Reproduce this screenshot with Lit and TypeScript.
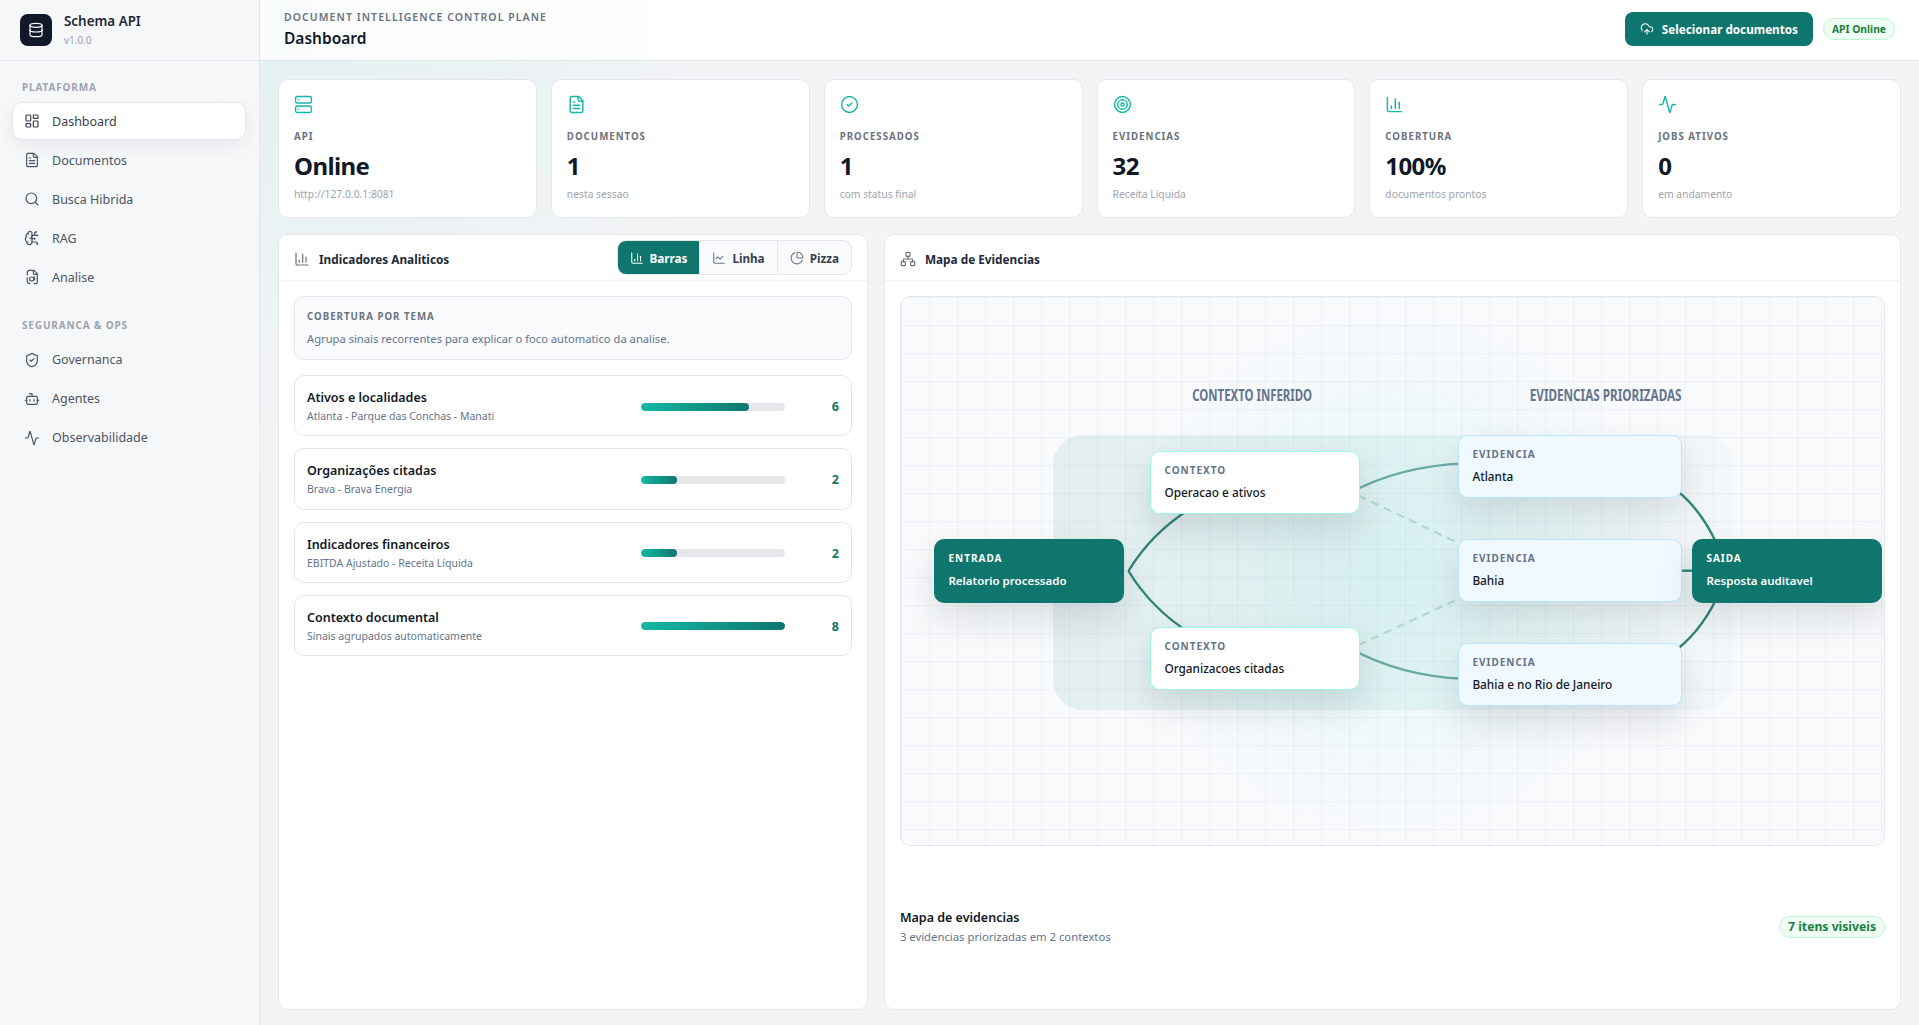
import { css, html, LitElement, svg } from "lit";
import { customElement } from "lit/decorators.js";

const ICONS = {
  dashboard: svg`<rect x="3" y="3" width="7" height="9" rx="1"/><rect x="14" y="3" width="7" height="5" rx="1"/><rect x="14" y="12" width="7" height="9" rx="1"/><rect x="3" y="16" width="7" height="5" rx="1"/>`,
  file: svg`<path d="M15 2H6a2 2 0 0 0-2 2v16a2 2 0 0 0 2 2h12a2 2 0 0 0 2-2V7Z"/><path d="M14 2v4a2 2 0 0 0 2 2h4"/><path d="M10 9H8"/><path d="M16 13H8"/><path d="M16 17H8"/>`,
  search: svg`<circle cx="11" cy="11" r="8"/><path d="m21 21-4.3-4.3"/>`,
  brain: svg`<path d="M12 5a3 3 0 1 0-5.997.125 4 4 0 0 0-2.526 5.77 4 4 0 0 0 .556 6.588A4 4 0 1 0 12 18Z"/><path d="M9 13a4.5 4.5 0 0 0 3-4"/><path d="M6.003 5.125A3 3 0 0 0 6.401 6.5"/><path d="M3.477 10.896a4 4 0 0 1 .585-.396"/><path d="M6 18a4 4 0 0 1-1.967-.516"/><path d="M12 13h4"/><path d="M12 18h6a2 2 0 0 1 2 2v1"/><path d="M12 8h8"/><path d="M16 8V5a2 2 0 0 1 2-2"/><circle cx="16" cy="13" r=".5"/><circle cx="18" cy="3" r=".5"/><circle cx="20" cy="21" r=".5"/><circle cx="20" cy="8" r=".5"/>`,
  scan: svg`<path d="M14 2v4a2 2 0 0 0 2 2h4"/><path d="M8 2h7l5 5v13a2 2 0 0 1-2 2h-3"/><path d="M8 2a3 3 0 0 0-3 3v4"/><path d="M5 13a8 8 0 0 0 0 5a4 4 0 0 0 4 4"/><circle cx="11.5" cy="15" r="3"/><path d="M15 11.5a5 5 0 0 1 1 5"/>`,
  shield: svg`<path d="M20 13c0 5-3.5 7.5-7.66 8.95a1 1 0 0 1-.67-.01C7.5 20.5 4 18 4 13V6a1 1 0 0 1 1-1c2 0 4.5-1.2 6.24-2.72a1.17 1.17 0 0 1 1.52 0C14.51 3.81 17 5 19 5a1 1 0 0 1 1 1z"/><path d="m9 12 2 2 4-4"/>`,
  bot: svg`<path d="M12 8V4H8"/><rect x="4" y="8" width="16" height="12" rx="2"/><path d="M2 14h2"/><path d="M20 14h2"/><path d="M15 13v2"/><path d="M9 13v2"/>`,
  activity: svg`<path d="M22 12h-2.48a2 2 0 0 0-1.93 1.46l-2.35 8.36a.25.25 0 0 1-.48 0L9.24 2.18a.25.25 0 0 0-.48 0l-2.35 8.36A2 2 0 0 1 4.49 12H2"/>`,
  database: svg`<ellipse cx="12" cy="5" rx="9" ry="3"/><path d="M3 5V19A9 3 0 0 0 21 19V5"/><path d="M3 12A9 3 0 0 0 21 12"/>`,
  server: svg`<rect x="2" y="2" width="20" height="8" rx="2"/><rect x="2" y="14" width="20" height="8" rx="2"/><path d="M6 6h.01"/><path d="M6 18h.01"/>`,
  check: svg`<circle cx="12" cy="12" r="10"/><path d="m9 12 2 2 4-4"/>`,
  target: svg`<circle cx="12" cy="12" r="10"/><circle cx="12" cy="12" r="6"/><circle cx="12" cy="12" r="2"/>`,
  column: svg`<path d="M3 3v16a2 2 0 0 0 2 2h16"/><path d="M18 17V9"/><path d="M13 17V5"/><path d="M8 17v-3"/>`,
  line: svg`<path d="M3 3v16a2 2 0 0 0 2 2h16"/><path d="m19 9-5 5-4-4-3 3"/>`,
  pie: svg`<path d="M21 12c.552 0 1.005-.449.95-.998a10 10 0 0 0-8.953-8.951c-.55-.055-.998.398-.998.95v8a1 1 0 0 0 1 1z"/><path d="M21.21 15.89A10 10 0 1 1 8 2.83"/>`,
  upload: svg`<path d="M12 13v8"/><path d="M4 14.899A7 7 0 1 1 15.71 8h1.79a4.5 4.5 0 0 1 2.5 8.242"/><path d="m8 17 4-4 4 4"/>`,
  network: svg`<rect x="16" y="16" width="6" height="6" rx="1"/><rect x="2" y="16" width="6" height="6" rx="1"/><rect x="9" y="2" width="6" height="6" rx="1"/><path d="M5 16v-3a1 1 0 0 1 1-1h12a1 1 0 0 1 1 1v3"/><path d="M12 12V8"/>`,
};

type IconName = keyof typeof ICONS;

const icon = (name: IconName, size = 16) => html`<svg
  class="icon"
  width=${size}
  height=${size}
  viewBox="0 0 24 24"
  fill="none"
  stroke="currentColor"
  stroke-width="1.8"
  stroke-linecap="round"
  stroke-linejoin="round"
>${ICONS[name]}</svg>`;

const NAV_GROUPS: { title: string; items: { label: string; icon: IconName; active?: boolean }[] }[] = [
  {
    title: "PLATAFORMA",
    items: [
      { label: "Dashboard", icon: "dashboard", active: true },
      { label: "Documentos", icon: "file" },
      { label: "Busca Hibrida", icon: "search" },
      { label: "RAG", icon: "brain" },
      { label: "Analise", icon: "scan" },
    ],
  },
  {
    title: "SEGURANCA & OPS",
    items: [
      { label: "Governanca", icon: "shield" },
      { label: "Agentes", icon: "bot" },
      { label: "Observabilidade", icon: "activity" },
    ],
  },
];

const STATS: { label: string; value: string; sub: string; icon: IconName }[] = [
  { label: "API", value: "Online", sub: "http://127.0.0.1:8081", icon: "server" },
  { label: "DOCUMENTOS", value: "1", sub: "nesta sessao", icon: "file" },
  { label: "PROCESSADOS", value: "1", sub: "com status final", icon: "check" },
  { label: "EVIDENCIAS", value: "32", sub: "Receita Líquida", icon: "target" },
  { label: "COBERTURA", value: "100%", sub: "documentos prontos", icon: "column" },
  { label: "JOBS ATIVOS", value: "0", sub: "em andamento", icon: "activity" },
];

const THEMES = [
  { name: "Ativos e localidades", sub: "Atlanta - Parque das Conchas - Manati", pct: 75, count: 6 },
  { name: "Organizações citadas", sub: "Brava - Brava Energia", pct: 25, count: 2 },
  { name: "Indicadores financeiros", sub: "EBITDA Ajustado - Receita Líquida", pct: 25, count: 2 },
  { name: "Contexto documental", sub: "Sinais agrupados automaticamente", pct: 100, count: 8 },
];

// canvas coordinates, origin at the inner corner of the map
const MAP_NODES = [
  { kind: "io", label: "ENTRADA", text: "Relatorio processado", x: 33, y: 242 },
  { kind: "ctx", label: "CONTEXTO", text: "Operacao e ativos", x: 249.5, y: 154 },
  { kind: "ctx", label: "CONTEXTO", text: "Organizacoes citadas", x: 249.5, y: 330 },
  { kind: "ev", label: "EVIDENCIA", text: "Atlanta", x: 557.5, y: 138 },
  { kind: "ev", label: "EVIDENCIA", text: "Bahia", x: 557.5, y: 242 },
  { kind: "ev", label: "EVIDENCIA", text: "Bahia e no Rio de Janeiro", x: 557.5, y: 346 },
  { kind: "io", label: "SAIDA", text: "Resposta auditavel", x: 791, y: 242 },
];

@customElement("app-root")
export class AppRoot extends LitElement {
  render() {
    return html`
      <aside class="sidebar">
        <div class="brand">
          <div class="logo">${icon("database", 16)}</div>
          <div>
            <div class="brand-name">Schema API</div>
            <div class="brand-version">v1.0.0</div>
          </div>
        </div>
        <nav class="nav">
          ${NAV_GROUPS.map(
            (group) => html`
              <div class="nav-group">
                <div class="nav-title">${group.title}</div>
                ${group.items.map(
                  (item) => html`
                    <a class="nav-item ${item.active ? "active" : ""}">
                      ${icon(item.icon, 16)}<span>${item.label}</span>
                    </a>
                  `
                )}
              </div>
            `
          )}
        </nav>
      </aside>

      <main class="main">
        <header class="topbar">
          <div>
            <div class="eyebrow">DOCUMENT INTELLIGENCE CONTROL PLANE</div>
            <h1>Dashboard</h1>
          </div>
          <div class="top-actions">
            <button class="primary">${icon("upload", 14)}Selecionar documentos</button>
            <span class="badge">API Online</span>
          </div>
        </header>

        <div class="content">
          <section class="stats">
            ${STATS.map(
              (stat) => html`
                <div class="stat">
                  <div class="stat-icon">${icon(stat.icon, 19)}</div>
                  <div class="stat-label">${stat.label}</div>
                  <div class="stat-value">${stat.value}</div>
                  <div class="stat-sub">${stat.sub}</div>
                </div>
              `
            )}
          </section>

          <section class="panels">
            <div class="panel">
              <div class="panel-head">
                <div class="panel-title">${icon("column", 16)}Indicadores Analiticos</div>
                <div class="tabs">
                  <span class="tab active">${icon("column", 14)}Barras</span>
                  <span class="tab">${icon("line", 14)}Linha</span>
                  <span class="tab">${icon("pie", 14)}Pizza</span>
                </div>
              </div>
              <div class="panel-body">
                <div class="note">
                  <div class="note-label">COBERTURA POR TEMA</div>
                  <div class="note-text">Agrupa sinais recorrentes para explicar o foco automatico da analise.</div>
                </div>
                <div class="rows">
                  ${THEMES.map(
                    (row) => html`
                      <div class="row">
                        <div class="row-text">
                          <div class="row-name">${row.name}</div>
                          <div class="row-sub">${row.sub}</div>
                        </div>
                        <div class="track"><div class="fill" style="width:${row.pct}%"></div></div>
                        <div class="count">${row.count}</div>
                      </div>
                    `
                  )}
                </div>
              </div>
            </div>

            <div class="panel">
              <div class="panel-head">
                <div class="panel-title">${icon("network", 16)}Mapa de Evidencias</div>
              </div>
              <div class="panel-body map-body">
                <div class="canvas">
                  <div class="band"></div>
                  ${this.renderEdges()}
                  ${MAP_NODES.map(
                    (node) => html`
                      <div class="node ${node.kind}" style="left:${node.x}px;top:${node.y}px">
                        <div class="node-label">${node.label}</div>
                        <div class="node-text">${node.text}</div>
                      </div>
                    `
                  )}
                </div>
                <div class="map-foot">
                  <div>
                    <div class="foot-title">Mapa de evidencias</div>
                    <div class="foot-sub">3 evidencias priorizadas em 2 contextos</div>
                  </div>
                  <span class="badge big">7 itens visiveis</span>
                </div>
              </div>
            </div>
          </section>
        </div>
      </main>
    `;
  }

  private renderEdges() {
    return html`<svg class="edges" viewBox="901 297 984 548">
      <text x="1252.5" y="401.3" text-anchor="middle" textLength="120" lengthAdjust="spacingAndGlyphs">CONTEXTO INFERIDO</text>
      <text x="1606.3" y="401.3" text-anchor="middle" textLength="152" lengthAdjust="spacingAndGlyphs">EVIDENCIAS PRIORIZADAS</text>
      <g class="edge">
        <path d="M1128.7 571Q1151.4 533.6 1190 509"/>
        <path d="M1128.7 571Q1151.4 608.4 1190 633"/>
        <path d="M1670 485Q1700 505 1718 545"/>
        <path d="M1670 655Q1700 635 1718 597"/>
        <path d="M1670 570.7H1700"/>
      </g>
      <g class="edge soft">
        <path d="M1350 493Q1400 466 1465 463.3"/>
        <path d="M1350 648Q1400 676 1465 679"/>
      </g>
      <g class="edge dashed">
        <path d="M1359 495.7L1459 543"/>
        <path d="M1359 645L1459 599"/>
      </g>
    </svg>`;
  }

  static styles = css`
    :host {
      display: grid;
      grid-template-columns: 260px 1fr;
      height: 100vh;
      overflow: hidden;
      font-family: "Noto Sans", "Open Sans", sans-serif;
      color: #111827;
      background: radial-gradient(circle at 260px 0, rgba(20, 184, 166, 0.07), transparent 480px), #f3f4f6;
    }

    .icon {
      display: block;
      flex: none;
    }

    .sidebar {
      background: #f6f7f9;
      border-right: 1px solid #e5e7eb;
    }

    .brand {
      display: flex;
      align-items: center;
      gap: 12px;
      height: 60px;
      padding: 0 20px;
      box-sizing: content-box;
      border-bottom: 1px solid #e5e7eb;
    }

    .logo {
      display: flex;
      align-items: center;
      justify-content: center;
      width: 32px;
      height: 32px;
      border-radius: 8px;
      background: #111827;
      color: #fff;
    }

    .brand-name {
      margin-top: -2px;
      font-size: 13.4px;
      font-weight: 600;
      line-height: 18px;
      color: #1f2937;
    }

    .brand-version {
      margin-top: 3px;
      font-size: 10px;
      line-height: 14px;
      color: #9ca3af;
    }

    .nav {
      padding: 17.5px 13px 0 12px;
    }

    .nav-group + .nav-group {
      margin-top: 21px;
    }

    .nav-title {
      padding: 0 10px;
      margin-bottom: 7.5px;
      font-size: 10px;
      font-weight: 700;
      line-height: 16px;
      letter-spacing: 0.85px;
      color: #9ca3af;
    }

    .nav-item {
      display: flex;
      align-items: center;
      gap: 12px;
      height: 38px;
      box-sizing: border-box;
      margin-bottom: 1px;
      padding: 0 11px;
      border: 1px solid transparent;
      border-radius: 10px;
      font-size: 12.5px;
      color: #4b5563;
    }

    .nav-item.active {
      background: #fff;
      border-color: #e5e7eb;
      box-shadow: 0 6px 16px rgba(15, 23, 42, 0.06);
      color: #374151;
    }

    .main {
      display: flex;
      flex-direction: column;
      min-width: 0;
    }

    .topbar {
      display: flex;
      align-items: center;
      justify-content: space-between;
      height: 58px;
      flex: none;
      padding: 0 24px 2px;
      box-sizing: content-box;
      border-bottom: 1px solid #e5e7eb;
      background: linear-gradient(90deg, #f9fcfc, #fff 30%);
    }

    .eyebrow {
      font-size: 10.5px;
      font-weight: 600;
      line-height: 14px;
      letter-spacing: 1.07px;
      color: #6b7280;
    }

    h1 {
      margin: 3px 0 0;
      font-size: 15.5px;
      font-weight: 600;
      line-height: 22px;
      color: #111827;
    }

    .top-actions {
      display: flex;
      align-items: center;
      gap: 10px;
    }

    .primary {
      display: flex;
      align-items: center;
      gap: 8px;
      height: 34px;
      padding: 0 15px;
      border: none;
      border-radius: 8px;
      background: #0f766e;
      color: #fff;
      font: 700 11.7px "Noto Sans", sans-serif;
    }

    .badge {
      display: inline-flex;
      align-items: center;
      height: 22px;
      box-sizing: border-box;
      padding: 0 8px;
      border: 1px solid #bbf7d0;
      border-radius: 999px;
      background: #f0fdf4;
      color: #15803d;
      font-size: 10.3px;
      font-weight: 700;
    }

    .badge.big {
      padding: 0 8px;
      font-size: 12.2px;
    }

    .content {
      display: flex;
      flex-direction: column;
      flex: 1;
      gap: 16px;
      min-height: 0;
      padding: 18px 18px 15px;
    }

    .stats {
      display: grid;
      grid-template-columns: repeat(6, 1fr);
      gap: 14px;
    }

    .stat {
      height: 139px;
      box-sizing: border-box;
      padding: 15px;
      border: 1px solid #e5e7eb;
      border-radius: 10px;
      background: #fff;
    }

    .stat-icon {
      color: #14b8a6;
    }

    .stat-label {
      margin-top: 16px;
      font-size: 9.7px;
      font-weight: 700;
      line-height: 14px;
      letter-spacing: 1px;
      color: #6b7280;
    }

    .stat-value {
      margin-top: 6px;
      font-size: 24px;
      font-weight: 700;
      line-height: 32px;
      letter-spacing: -0.6px;
      color: #111827;
    }

    .stat-sub {
      margin-top: 4.5px;
      font-size: 10.3px;
      line-height: 15px;
      color: #9ca3af;
    }

    .panels {
      display: grid;
      grid-template-columns: 0.58fr 1fr;
      gap: 16px;
      flex: 1;
      min-height: 0;
    }

    .panel {
      display: flex;
      flex-direction: column;
      min-width: 0;
      border: 1px solid #e5e7eb;
      border-radius: 10px;
      background: #fff;
    }

    .panel-head {
      display: flex;
      align-items: center;
      justify-content: space-between;
      height: 46px;
      box-sizing: border-box;
      padding: 0 15px;
      border-bottom: 1px solid #f0f1f3;
    }

    .panel-title {
      display: flex;
      align-items: center;
      gap: 9px;
      margin-top: 2px;
      font-size: 11.8px;
      font-weight: 700;
      color: #1f2937;
    }

    .panel-title .icon {
      color: #6b7280;
    }

    .tabs {
      display: flex;
      height: 35px;
      box-sizing: border-box;
      overflow: hidden;
      border: 1px solid #e5e7eb;
      border-radius: 9px;
      background: #f8fafc;
    }

    .tab {
      display: flex;
      align-items: center;
      gap: 6px;
      padding: 0 12px;
      font-size: 11.7px;
      font-weight: 700;
      color: #374151;
    }

    .tab + .tab {
      border-left: 1px solid #e5e7eb;
    }

    .tab .icon {
      color: #6b7280;
    }

    .tab.active {
      background: #0f766e;
      color: #fff;
    }

    .tab.active .icon {
      color: #fff;
    }

    .panel-body {
      display: flex;
      flex-direction: column;
      flex: 1;
      gap: 15px;
      min-height: 0;
      padding: 15px;
    }

    .note {
      height: 64px;
      box-sizing: border-box;
      padding: 13px 12px 0;
      border: 1px solid #e5e7eb;
      border-radius: 10px;
      background: #f8fafc;
    }

    .note-label {
      font-size: 9.7px;
      font-weight: 700;
      line-height: 14px;
      letter-spacing: 1px;
      color: #6b7280;
    }

    .note-text {
      margin-top: 7px;
      font-size: 11.2px;
      line-height: 16px;
      color: #64748b;
    }

    .rows {
      display: flex;
      flex-direction: column;
      gap: 12px;
    }

    .row {
      display: grid;
      grid-template-columns: 1fr 144px 54px;
      align-items: center;
      padding: 13px 12px 11.33px;
      border: 1px solid #e5e7eb;
      border-radius: 10px;
    }

    .row-name {
      font-size: 12.5px;
      font-weight: 600;
      line-height: 17px;
      color: #111827;
    }

    .row-sub {
      margin-top: 3px;
      font-size: 10.5px;
      line-height: 15px;
      color: #64748b;
    }

    .track {
      height: 8px;
      border-radius: 999px;
      background: #e5e7eb;
      overflow: hidden;
    }

    .fill {
      height: 100%;
      border-radius: 999px;
      background: linear-gradient(90deg, #14b8a6, #0f766e);
    }

    .count {
      text-align: right;
      font-size: 12.5px;
      font-weight: 700;
      color: #0f766e;
    }

    .map-body {
      gap: 0;
      padding-bottom: 0;
    }

    .canvas {
      position: relative;
      height: 550px;
      flex: none;
      box-sizing: border-box;
      overflow: hidden;
      border: 1px solid #e2e8f0;
      border-radius: 10px;
      background-color: #f8fafc;
      background-image:
        radial-gradient(circle at 50% 50%, rgba(20, 184, 166, 0.08), transparent 48%),
        linear-gradient(rgba(226, 232, 240, 0.5) 1px, transparent 1px),
        linear-gradient(90deg, rgba(226, 232, 240, 0.5) 1px, transparent 1px);
      background-size: 100% 100%, 28px 28px, 28px 28px;
    }

    .band {
      position: absolute;
      left: 152px;
      top: 138px;
      width: 680px;
      height: 275px;
      border-radius: 30px;
      background: linear-gradient(90deg, rgba(15, 118, 110, 0.09), rgba(20, 184, 166, 0.07) 55%, rgba(15, 118, 110, 0.025));
    }

    .edges {
      position: absolute;
      inset: 0;
      width: 100%;
      height: 100%;
    }

    .edges text {
      font-size: 16px;
      font-weight: 700;
      fill: #64748b;
    }

    .edge path {
      fill: none;
      stroke: #2f8579;
      stroke-width: 2.4;
    }

    .edge.soft path {
      stroke: #6aa9a3;
    }

    .edge.dashed path {
      stroke: #b4d8d3;
      stroke-dasharray: 8 6;
    }

    .node {
      position: absolute;
      box-sizing: border-box;
      height: 63px;
      padding: 11px 13px;
      border: 1.5px solid transparent;
      border-radius: 10px;
      box-shadow: 0 16px 36px rgba(15, 23, 42, 0.12);
    }

    .node.ctx {
      width: 209.5px;
      background: #fff;
      border-color: #99f6e4;
    }

    .node.ev {
      width: 223.5px;
      background: #f0f9ff;
      border-color: #bae6fd;
    }

    .node.io {
      width: 190px;
      height: 64px;
      border: none;
      padding: 11.5px 14.5px;
      background: #0f766e;
      color: #fff;
    }

    .node-label {
      font-size: 10px;
      font-weight: 700;
      line-height: 14px;
      letter-spacing: 1px;
      color: #64748b;
    }

    .node-text {
      margin-top: 7px;
      font-size: 11.8px;
      font-weight: 500;
      line-height: 16px;
      color: #111827;
    }

    .node.io .node-label,
    .node.io .node-text {
      color: #fff;
      font-weight: 700;
    }

    .node.io .node-text {
      margin-top: 8px;
      font-size: 11.5px;
      font-weight: 600;
    }

    .map-foot {
      display: flex;
      align-items: center;
      justify-content: space-between;
      flex: 1;
      padding-bottom: 2px;
    }

    .foot-title {
      font-size: 12.5px;
      font-weight: 600;
      line-height: 17px;
      color: #111827;
    }

    .foot-sub {
      margin-top: 3px;
      font-size: 11.3px;
      line-height: 15px;
      color: #64748b;
    }
  `;
}
